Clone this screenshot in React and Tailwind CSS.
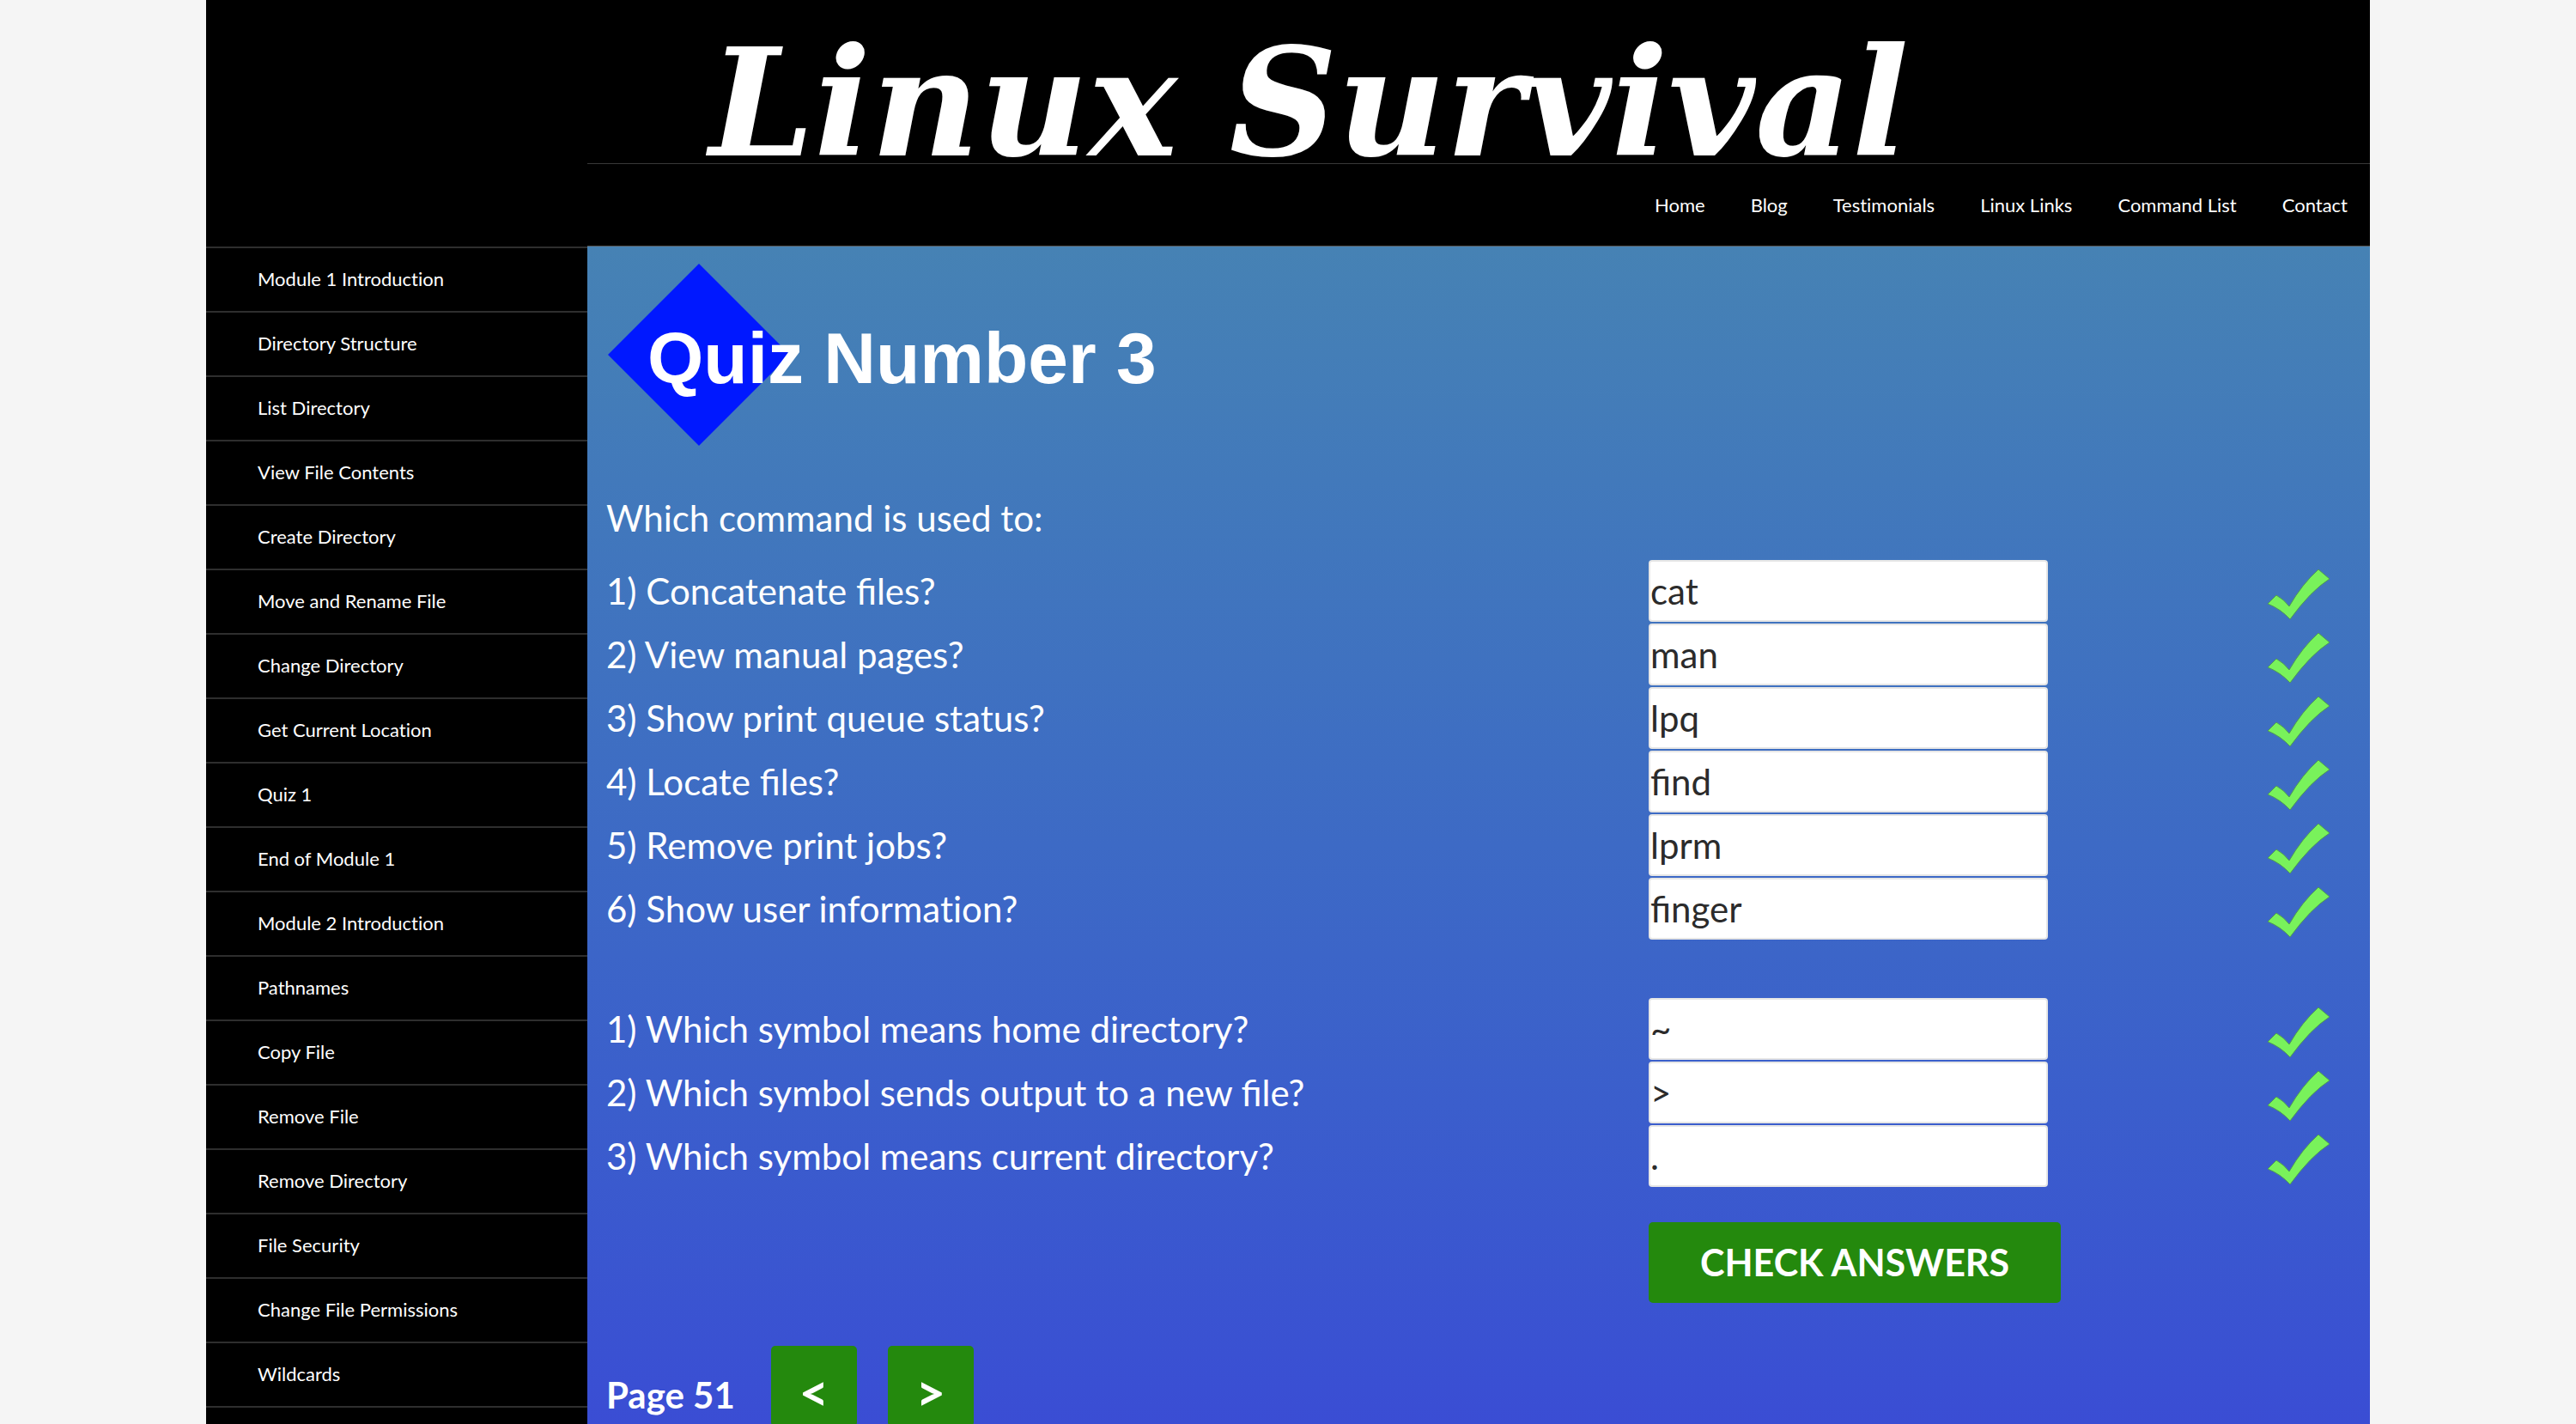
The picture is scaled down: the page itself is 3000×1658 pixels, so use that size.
const navLinks = ["Home", "Blog", "Testimonials", "Linux Links", "Command List", "Contact"];

const lessons = [
  "Module 1 Introduction",
  "Directory Structure",
  "List Directory",
  "View File Contents",
  "Create Directory",
  "Move and Rename File",
  "Change Directory",
  "Get Current Location",
  "Quiz 1",
  "End of Module 1",
  "Module 2 Introduction",
  "Pathnames",
  "Copy File",
  "Remove File",
  "Remove Directory",
  "File Security",
  "Change File Permissions",
  "Wildcards",
];

const commandQuestions = [
  { id: "concatenate", label: "1) Concatenate files?", answer: "cat" },
  { id: "manual", label: "2) View manual pages?", answer: "man" },
  { id: "queue", label: "3) Show print queue status?", answer: "lpq" },
  { id: "locate", label: "4) Locate files?", answer: "find" },
  { id: "remove-job", label: "5) Remove print jobs?", answer: "lprm" },
  { id: "user-info", label: "6) Show user information?", answer: "finger", plain: true },
];

const symbolQuestions = [
  { id: "home-dir", label: "1) Which symbol means home directory?", answer: "~" },
  { id: "output", label: "2) Which symbol sends output to a new file?", answer: ">" },
  { id: "current-dir", label: "3) Which symbol means current directory?", answer: "." },
];

function CheckMark() {
  return (
    <svg viewBox="0 0 73 58" className="mt-2 h-[58px] w-[73px]" role="img" aria-label="Correct">
      <path
        d="M0 40 L10 30 Q19 35 25 43 Q40 17 59 0 L72 11 Q50 25 26 58 Q15 46 0 40 Z"
        fill="#79f25b"
        stroke="#4f9a52"
        strokeWidth="1"
      />
    </svg>
  );
}

// `plain` turns ligatures off for labels where Lato would join "ti".
function QuestionRow({ id, label, answer, plain }) {
  return (
    <div className="grid h-[74px] grid-cols-[1fr_721px_74px] items-center">
      <label htmlFor={id} className={plain ? "[font-variant-ligatures:none]" : ""}>{label}</label>
      <input
        id={id}
        type="text"
        defaultValue={answer}
        className="h-[72px] w-[465px] rounded border-2 border-[#e6e6e6] bg-white text-[#2b2b2b]"
      />
      <CheckMark />
    </div>
  );
}

export default function App() {
  return (
    <div className="h-screen overflow-hidden bg-[#f5f5f5] font-['Lato',sans-serif] text-white">
      <div className="mx-auto flex h-full max-w-[2520px] flex-col bg-black">
        <header className="ml-[444px] shrink-0">
          <a href="#" className="flex h-[190px] items-end pl-[142px] font-['DejaVu_Serif',serif] text-[174px] leading-[140px] font-bold whitespace-nowrap italic">
            Linux Survival
          </a>
          <nav className="flex h-24 items-center justify-end gap-[53px] border-t border-[#383838] pr-[26px] text-[22px] [font-variant-ligatures:none]">
            {navLinks.map((item) => (
              <a key={item} href="#">{item}</a>
            ))}
          </nav>
        </header>
        <div className="flex min-h-0 flex-1">
          <aside className="w-[444px] shrink-0 [font-variant-ligatures:none]">
            <ul className="pt-px">
              {lessons.map((item) => (
                <li key={item} className="h-[75px] border-t-2 border-[#2e2e2e]">
                  <a href="#" className="flex h-full items-center pb-[2px] pl-[60px] text-[22px]">{item}</a>
                </li>
              ))}
              <li className="border-t-2 border-[#2e2e2e]" />
            </ul>
          </aside>
          <main className="min-w-0 flex-1 border-t border-[#555] bg-linear-to-b from-[#4682b4] to-[#3a4dd4] pt-5 pr-[45px] pl-[22px] text-[42px]">
            <h1 className="relative flex h-[212px] items-center pl-12 font-['Liberation_Sans',sans-serif] text-[84px] font-bold">
              <svg viewBox="0 0 212 212" className="absolute top-0 left-[2px] size-[212px]" aria-hidden="true">
                <path d="M106 0 L212 106 L106 212 L0 106 Z" fill="#0018ff" />
              </svg>
              <span className="relative pt-2">Quiz Number 3</span>
            </h1>
            <form className="pt-11">
              <p className="mb-2 flex h-[80px] items-center">Which command is used to:</p>
              {commandQuestions.map((q) => (
                <QuestionRow key={q.id} {...q} />
              ))}
              <div className="pt-[66px]">
                {symbolQuestions.map((q) => (
                  <QuestionRow key={q.id} {...q} />
                ))}
              </div>
              <div className="grid grid-cols-[1fr_795px] pt-10">
                <button type="button" className="col-start-2 h-[94px] justify-self-start rounded-[5px] bg-[#24890d] px-[60px] text-[43px] font-bold">
                  CHECK ANSWERS
                </button>
              </div>
            </form>
            <div className="flex items-center pt-[50px] font-bold">
              <span className="pt-5">Page 51</span>
              <button type="button" aria-label="Previous page" className="ml-[42px] h-[94px] w-[100px] rounded-[5px] bg-[#24890d] pt-3 text-[60px] leading-none">
                &lt;
              </button>
              <button type="button" aria-label="Next page" className="ml-9 h-[94px] w-[100px] rounded-[5px] bg-[#24890d] pt-3 text-[60px] leading-none">
                &gt;
              </button>
            </div>
          </main>
        </div>
      </div>
    </div>
  );
}
